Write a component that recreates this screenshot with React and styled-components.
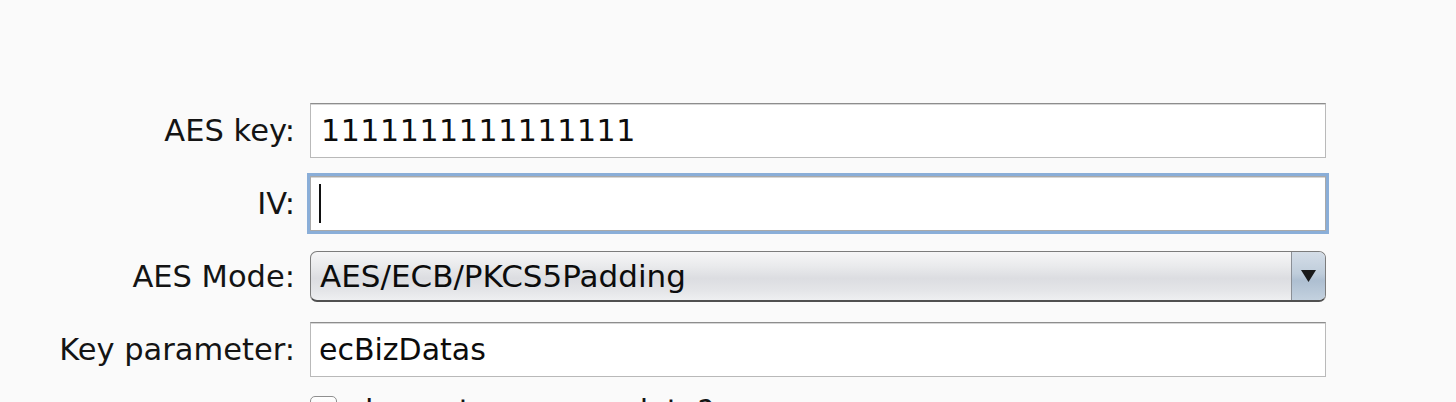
import React from 'react';
import styled, { createGlobalStyle } from 'styled-components';

const GlobalStyle = createGlobalStyle`
  html, body {
    margin: 0;
    padding: 0;
    background: #fafafa;
    overflow: hidden;
  }
  body {
    font-family: "DejaVu Sans", "Liberation Sans", sans-serif;
    color: #111;
  }
`;

const Panel = styled.div`
  width: 1456px;
  height: 402px;
  box-sizing: border-box;
  padding-top: 103px;
  display: grid;
  grid-template-columns: 295px 1016px;
  grid-auto-rows: 55px;
  column-gap: 15px;
  row-gap: 18px;
  align-items: center;
  overflow: hidden;
`;

const Label = styled.label`
  font-size: 30.5px;
  text-align: right;
  white-space: nowrap;
  color: #141414;
`;

const Field = styled.div`
  height: 55px;
  box-sizing: border-box;
  background: #fff;
  border: 1px solid #b9b9b9;
  border-top-color: #8d8d8d;
  box-shadow: inset 0 1px 0 #d6d6d6;
  display: flex;
  align-items: center;
  padding-left: 8px;
  font-size: 30px;
  color: #0c0c0c;
  white-space: nowrap;
  ${props =>
    props.focused &&
    `
    outline: 3px solid #8aaed8;
    outline-offset: 0px;
    border-color: #a9a9a9;
    padding-left: 8px;
  `}
`;

const Digits = styled.span`
  letter-spacing: 0.6px;
  padding-left: 2px;
`;

const Caret = styled.span`
  display: block;
  width: 2px;
  height: 39px;
  background: #111;
`;

const Combo = styled.div`
  height: 51px;
  box-sizing: border-box;
  display: flex;
  border: 1px solid #7c7c7c;
  border-bottom: 2px solid #505050;
  border-radius: 7px;
  overflow: hidden;
  background: linear-gradient(#f6f6f7 0%, #e9eaec 30%, #dcdde1 55%, #e4e5e8 80%, #eeeff1 100%);
`;

const ComboValue = styled.div`
  flex: 1;
  display: flex;
  align-items: center;
  padding-left: 9px;
  font-size: 31px;
  color: #0c0c0c;
  white-space: nowrap;
`;

const ArrowButton = styled.div`
  width: 33px;
  border-left: 1px solid #8a8f96;
  display: flex;
  align-items: center;
  justify-content: center;
  background: linear-gradient(#d4dde7 0%, #bfcddb 45%, #aebfd1 60%, #c3d1df 100%);
`;

const CheckRow = styled.div`
  grid-column: 2;
  align-self: start;
  display: flex;
  align-items: flex-start;
  gap: 17px;
  height: 55px;
  box-sizing: border-box;
`;

const CheckBox = styled.span`
  display: block;
  flex: none;
  width: 27px;
  height: 27px;
  margin-top: 1px;
  box-sizing: border-box;
  border: 1px solid #8f8f8f;
  border-radius: 5px;
  background: linear-gradient(#ffffff, #e8e8e8);
`;

const CheckText = styled.span`
  font-size: 30.5px;
  line-height: 30px;
  margin-top: 1px;
  color: #141414;
  white-space: nowrap;
`;

export default function App() {
  return (
    <>
      <GlobalStyle />
      <Panel>
        <Label>AES key:</Label>
        <Field>
          <Digits>1111111111111111</Digits>
        </Field>

        <Label>IV:</Label>
        <Field focused>
          <Caret />
        </Field>

        <Label>AES Mode:</Label>
        <Combo>
          <ComboValue>AES/ECB/PKCS5Padding</ComboValue>
          <ArrowButton>
            <svg width="15" height="12" viewBox="0 0 15 12">
              <path d="M0 0 H15 L7.5 12 Z" fill="#1a1a1a" />
            </svg>
          </ArrowButton>
        </Combo>

        <Label>Key parameter:</Label>
        <Field>ecBizDatas</Field>

        <CheckRow>
          <CheckBox />
          <CheckText>decrypt response data?</CheckText>
        </CheckRow>
      </Panel>
    </>
  );
}
